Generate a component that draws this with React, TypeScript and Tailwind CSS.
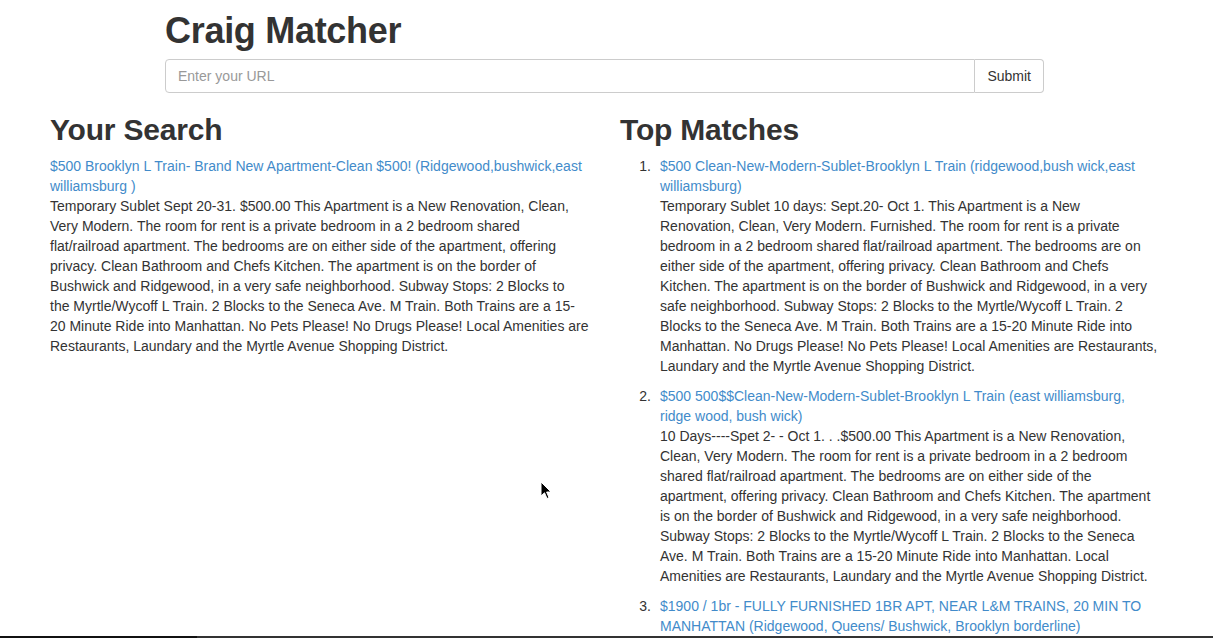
import React from "react";

const searchTitle = [
	"$500 Brooklyn L Train- Brand New Apartment-Clean $500! (Ridgewood,bushwick,east",
	"williamsburg )",
];

const searchBody = [
	"Temporary Sublet Sept 20-31. $500.00 This Apartment is a New Renovation, Clean,",
	"Very Modern. The room for rent is a private bedroom in a 2 bedroom shared",
	"flat/railroad apartment. The bedrooms are on either side of the apartment, offering",
	"privacy. Clean Bathroom and Chefs Kitchen. The apartment is on the border of",
	"Bushwick and Ridgewood, in a very safe neighborhood. Subway Stops: 2 Blocks to",
	"the Myrtle/Wycoff L Train. 2 Blocks to the Seneca Ave. M Train. Both Trains are a 15-",
	"20 Minute Ride into Manhattan. No Pets Please! No Drugs Please! Local Amenities are",
	"Restaurants, Laundary and the Myrtle Avenue Shopping District.",
];

const matches = [
	{
		title: [
			"$500 Clean-New-Modern-Sublet-Brooklyn L Train (ridgewood,bush wick,east",
			"williamsburg)",
		],
		body: [
			"Temporary Sublet 10 days: Sept.20- Oct 1. This Apartment is a New",
			"Renovation, Clean, Very Modern. Furnished. The room for rent is a private",
			"bedroom in a 2 bedroom shared flat/railroad apartment. The bedrooms are on",
			"either side of the apartment, offering privacy. Clean Bathroom and Chefs",
			"Kitchen. The apartment is on the border of Bushwick and Ridgewood, in a very",
			"safe neighborhood. Subway Stops: 2 Blocks to the Myrtle/Wycoff L Train. 2",
			"Blocks to the Seneca Ave. M Train. Both Trains are a 15-20 Minute Ride into",
			"Manhattan. No Drugs Please! No Pets Please! Local Amenities are Restaurants,",
			"Laundary and the Myrtle Avenue Shopping District.",
		],
	},
	{
		title: [
			"$500 500$$Clean-New-Modern-Sublet-Brooklyn L Train (east williamsburg,",
			"ridge wood, bush wick)",
		],
		body: [
			"10 Days----Spet 2- - Oct 1. . .$500.00 This Apartment is a New Renovation,",
			"Clean, Very Modern. The room for rent is a private bedroom in a 2 bedroom",
			"shared flat/railroad apartment. The bedrooms are on either side of the",
			"apartment, offering privacy. Clean Bathroom and Chefs Kitchen. The apartment",
			"is on the border of Bushwick and Ridgewood, in a very safe neighborhood.",
			"Subway Stops: 2 Blocks to the Myrtle/Wycoff L Train. 2 Blocks to the Seneca",
			"Ave. M Train. Both Trains are a 15-20 Minute Ride into Manhattan. Local",
			"Amenities are Restaurants, Laundary and the Myrtle Avenue Shopping District.",
		],
	},
	{
		title: [
			"$1900 / 1br - FULLY FURNISHED 1BR APT, NEAR L&M TRAINS, 20 MIN TO",
			"MANHATTAN (Ridgewood, Queens/ Bushwick, Brooklyn borderline)",
		],
		body: [],
	},
];

function Lines({ lines }: { lines: string[] }) {
	return (
		<>
			{lines.map((line, i) => (
				<span key={i} className="block whitespace-nowrap">
					{line}
				</span>
			))}
		</>
	);
}

function Listing({ title, body }: { title: string[]; body: string[] }) {
	return (
		<div>
			<a href="#" className="block text-[#428bca]">
				<Lines lines={title} />
			</a>
			{body.length > 0 && (
				<p className="mb-[10px]">
					<Lines lines={body} />
				</p>
			)}
		</div>
	);
}

export default function App() {
	return (
		<div className="relative h-[638px] overflow-hidden bg-white font-['Liberation_Sans',Arial,sans-serif] text-[14px] leading-[20px] text-[#333]">
			<header className="ml-[165px] w-[879px]">
				<h1 className="mt-[11px] text-[36px] font-bold leading-[40px] tracking-[-0.3px] text-[#333]">
					Craig Matcher
				</h1>
				<div className="mt-[8px] flex h-[34px]">
					<input
						type="text"
						placeholder="Enter your URL"
						className="h-full flex-1 rounded-l-[4px] border border-[#ccc] px-[12px] text-[14px] text-[#555] placeholder:text-[#999] outline-none"
					/>
					<button className="h-full rounded-r-[4px] border border-l-0 border-[#ccc] bg-white px-[12px] text-[14px] text-[#333]">
						Submit
					</button>
				</div>
			</header>

			<main className="grid grid-cols-[540px_1fr] gap-[30px] px-[50px]">
				<section>
					<h2 className="mt-[20px] mb-[10px] text-[30px] font-bold leading-[33px] tracking-[-0.2px]">
						Your Search
					</h2>
					<Listing title={searchTitle} body={searchBody} />
				</section>
				<section>
					<h2 className="mt-[20px] mb-[10px] text-[30px] font-bold leading-[33px] tracking-[-0.2px]">
						Top Matches
					</h2>
					<ol className="flex flex-col">
						{matches.map((m, i) => (
							<li key={i} className="flex">
								<span className="w-[40px] shrink-0 pr-[9px] text-right">
									{i + 1}.
								</span>
								<Listing title={m.title} body={m.body} />
							</li>
						))}
					</ol>
				</section>
			</main>

			<svg
				className="absolute left-[540px] top-[481px]"
				width="12"
				height="19"
				viewBox="0 0 12 19"
			>
				<path
					d="M1 1 L1 15 L4.5 11.8 L7 17.5 L9 16.6 L6.6 11 L11 11 Z"
					fill="#000"
					stroke="#fff"
					strokeWidth="1"
				/>
			</svg>

			<div className="absolute bottom-0 left-0 flex h-[2px] w-full">
				<div className="w-[197px] bg-[#111]" />
				<div className="flex-1 bg-[#333]" />
			</div>
		</div>
	);
}
